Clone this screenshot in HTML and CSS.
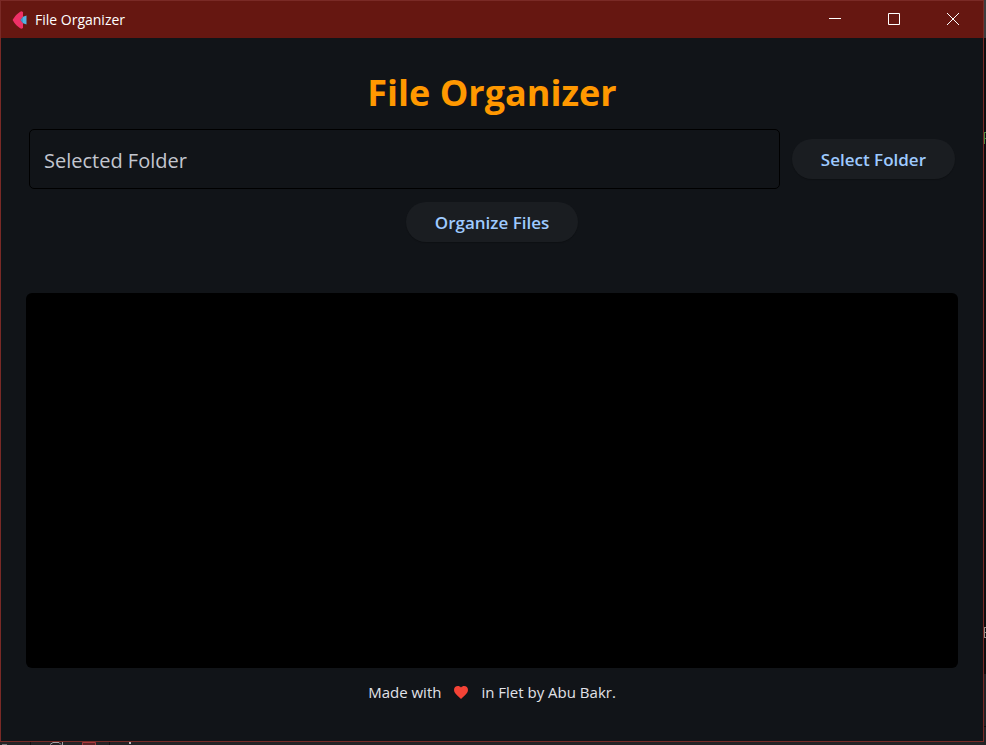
FILE: index.html
```html
<!DOCTYPE html>
<html lang="en">
<head>
<meta charset="utf-8">
<title>File Organizer</title>
<link rel="stylesheet" href="styles.css">
</head>
<body>
<div class="window">
  <header class="titlebar">
    <svg class="logo" viewBox="0 0 16 20" aria-hidden="true">
      <path fill="#ee3167" d="M9.5 1.2 11 2v5L8.500 10l2.500 3v5l-1.500.8C6 17.500 2.500 13.500.6 10 2.500 6.500 6 2.500 9.500 1.200z"/>
      <path fill="#54b4e4" d="M8.500 10 11 6.800l3.500-1.300v9L11 13.200z"/>
      <path fill="#2a72a8" d="m8.500 10 2.500-3.200v6.400z" opacity=".4"/>
    </svg>
    <span class="caption">File Organizer</span>
    <div class="controls">
      <button class="control" type="button" aria-label="Minimize"><svg viewBox="0 0 14 14"><path d="M1 6.500h12"/></svg></button>
      <button class="control" type="button" aria-label="Maximize"><svg viewBox="0 0 14 14"><path d="M1.500 1.500h11v11h-11z"/></svg></button>
      <button class="control" type="button" aria-label="Close"><svg viewBox="0 0 14 14"><path d="m1 1 12 12M13 1 1 13"/></svg></button>
    </div>
  </header>
  <main class="content">
    <h1 class="heading">File Organizer</h1>
    <div class="picker">
      <input class="folder" type="text" placeholder="Selected Folder" aria-label="Selected Folder" readonly>
      <button class="pill" type="button">Select Folder</button>
    </div>
    <button class="pill organize" type="button">Organize Files</button>
    <section class="log" aria-label="Log"></section>
    <footer class="footer">
      <span>Made with</span>
      <svg class="heart" viewBox="2 3 20 18.400" aria-hidden="true"><path d="m12 21.350-1.450-1.320C5.400 15.360 2 12.280 2 8.500 2 5.420 4.420 3 7.500 3c1.740 0 3.410.81 4.500 2.090C13.090 3.810 14.760 3 16.500 3 19.580 3 22 5.420 22 8.500c0 3.780-3.400 6.860-8.550 11.540z"/></svg>
      <span>in Flet by Abu Bakr.</span>
    </footer>
  </main>
</div>
<svg class="behind-right" viewBox="0 0 2 745" preserveAspectRatio="none" aria-hidden="true">
  <path fill="#3c3c3e" d="M0 0h2v38H0z"/>
  <path fill="#0d0d0f" d="M0 38h2v636H0z"/>
  <path fill="#222225" d="M0 674h2v71H0z"/>
  <path fill="#0d0d0f" d="M0 726h2v1H0z"/>
  <path fill="#4b8a43" d="M0 132h2v1H1v5h1v1H1v5H0z"/>
  <path fill="#96908a" d="M0 627h2v1H1v4h1v1H1v4h1v1H0z"/>
</svg>
<svg class="behind-bottom" viewBox="0 0 200 3" aria-hidden="true">
  <path fill="#77777a" d="M2 2h5v1H2z"/>
  <path fill="#101012" d="M30 0h1v3h-1zM109 0h1v3h-1z"/>
  <path fill="none" stroke="#a0a0a4" d="M50 2.500 53 .5h6l2 2M62.500 0v3"/>
  <path fill="#5c2326" stroke="#a33a3e" d="M82.500 3V.5h13V3"/>
  <path fill="#b8b8ba" d="M129 0h2v2h-2z"/>
</svg>
</body>
</html>
```
FILE: styles.css
```css
* {
  box-sizing: border-box;
}

body {
  margin: 0;
  height: 100vh;
  padding: 0 2px 3px 0;
  overflow: hidden;
  background: #232326;
  color: #e1e2e8;
  font-family: "Open Sans", "Noto Sans", sans-serif;
}

.window {
  height: 100%;
  display: flex;
  flex-direction: column;
  border: 1px solid #7a2a26;
  background: #111418;
}

.titlebar {
  flex: none;
  height: 37px;
  display: flex;
  align-items: center;
  padding-left: 11px;
  background: #661711;
  color: #fff;
}

.logo {
  width: 16px;
  height: 20px;
}

.caption {
  margin-left: 7px;
  font-size: 14px;
}

.controls {
  display: flex;
  height: 100%;
  margin-left: auto;
}

.control {
  width: 59px;
  padding: 0 1px 2px 0;
  border: 0;
  background: none;
}

.control svg {
  display: block;
  width: 14px;
  height: 14px;
  margin: 0 auto;
  fill: none;
  stroke: #fff;
}

.content {
  flex: 1;
  min-height: 0;
  display: flex;
  flex-direction: column;
  align-items: center;
  padding: 28px 25px 36px;
}

.heading {
  margin: 0 0 10px;
  color: #ff9800;
  font-size: 36px;
  font-weight: 700;
  line-height: 53px;
}

.picker {
  align-self: stretch;
  display: flex;
  align-items: center;
  gap: 12px;
  padding: 0 3px;
}

.folder {
  flex: 1;
  min-width: 0;
  height: 60px;
  padding: 2px 14px 0;
  border: 1px solid #000;
  border-radius: 5px;
  background: transparent;
  color: #e1e2e8;
  font: 20px "Open Sans", "Noto Sans", sans-serif;
}

.folder::placeholder {
  color: #c3c6cf;
  opacity: 1;
}

.pill {
  flex: none;
  height: 40px;
  padding: 0 29px;
  border: 0;
  border-radius: 20px;
  background: #1a1d21;
  box-shadow: 0 1px 1px rgba(0, 0, 0, 0.2);
  color: #9ecaff;
  font: 600 17px "Open Sans", "Noto Sans", sans-serif;
}

.organize {
  margin: 13px 0 51px;
}

.log {
  flex: 1;
  align-self: stretch;
  border-radius: 6px;
  background: #000;
}

.footer {
  display: flex;
  align-items: center;
  margin-top: 12px;
  font-size: 15px;
  line-height: 25px;
}

.heart {
  width: 14px;
  height: 13px;
  margin: 0 13px;
  fill: #f44336;
}

.behind-right {
  position: absolute;
  top: 0;
  right: 0;
  width: 2px;
  height: 100vh;
}

.behind-bottom {
  position: absolute;
  bottom: 0;
  left: 0;
  width: 200px;
  height: 3px;
}
```
